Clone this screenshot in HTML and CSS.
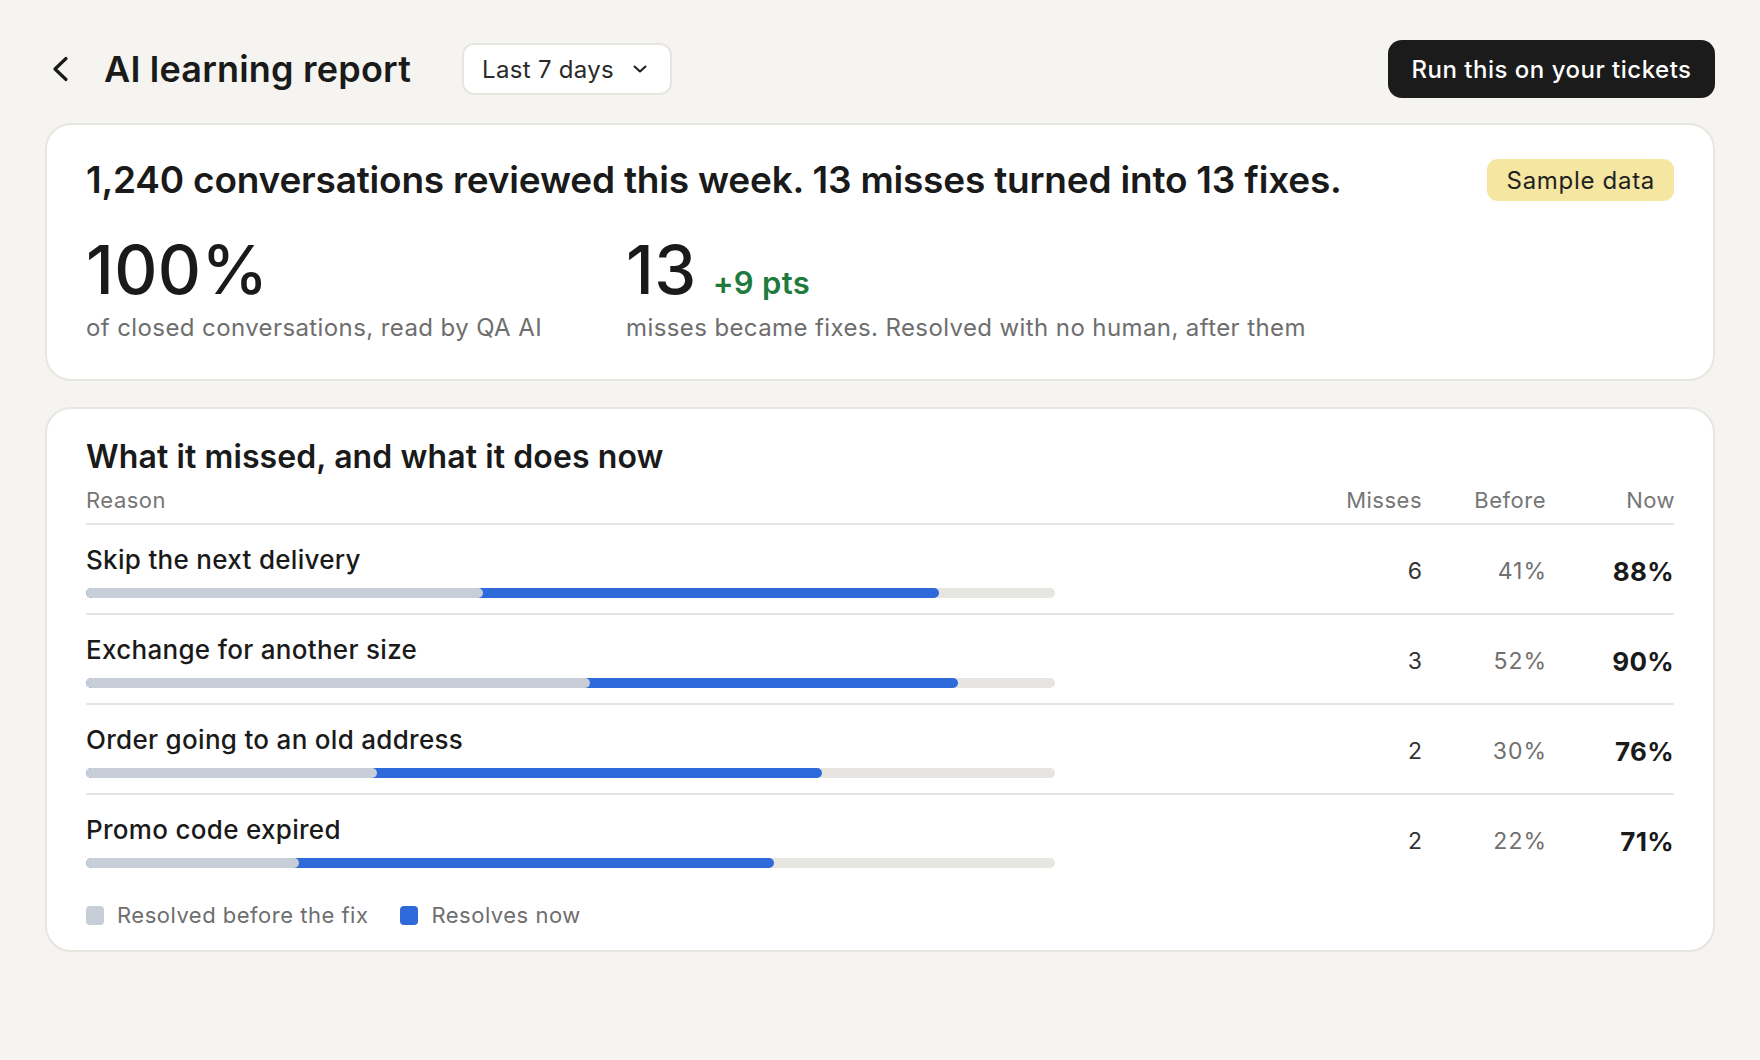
FILE: index.html
```html
<!DOCTYPE html>
<html lang="en">
<head>
<meta charset="utf-8">
<title>AI learning report</title>
<link rel="stylesheet" href="styles.css">
</head>
<body>
<div class="page">
  <header class="topbar">
    <div class="topbar-left">
      <button class="back" aria-label="Back">
        <svg width="18" height="26" viewBox="0 0 18 26"><polyline points="15,2.5 4,13 15,23.5" fill="none" stroke="#1a1a1a" stroke-width="3.2" stroke-linecap="round" stroke-linejoin="round"/></svg>
      </button>
      <h1 class="title">AI learning report</h1>
      <button class="range">
        <span>Last 7 days</span>
        <svg width="14" height="8" viewBox="0 0 14 8"><polyline points="1.5,1.5 7,6.5 12.5,1.5" fill="none" stroke="#1a1a1a" stroke-width="2" stroke-linecap="round" stroke-linejoin="round"/></svg>
      </button>
    </div>
    <button class="cta">Run this on your tickets</button>
  </header>

  <section class="card summary">
    <div class="summary-head">
      <h2 class="headline">1,240 conversations reviewed this week. 13 misses turned into 13 fixes.</h2>
      <span class="badge">Sample data</span>
    </div>
    <div class="stats">
      <div class="stat">
        <div class="stat-value"><span class="big">100%</span></div>
        <div class="stat-label">of closed conversations, read by QA AI</div>
      </div>
      <div class="stat">
        <div class="stat-value"><span class="big">13</span><span class="delta">+9 pts</span></div>
        <div class="stat-label">misses became fixes. Resolved with no human, after them</div>
      </div>
    </div>
  </section>

  <section class="card misses">
    <h2 class="section-title">What it missed, and what it does now</h2>
    <div class="table">
      <div class="row head">
        <div class="c-reason">Reason</div>
        <div class="c-num">Misses</div>
        <div class="c-num">Before</div>
        <div class="c-num">Now</div>
      </div>
      <div class="row item">
        <div class="c-reason">
          <div class="reason">Skip the next delivery</div>
          <div class="bar"><div class="now" style="width:88%"></div><div class="before" style="width:41%"></div></div>
        </div>
        <div class="c-num count">6</div>
        <div class="c-num pct">41%</div>
        <div class="c-num now-val">88%</div>
      </div>
      <div class="row item">
        <div class="c-reason">
          <div class="reason">Exchange for another size</div>
          <div class="bar"><div class="now" style="width:90%"></div><div class="before" style="width:52%"></div></div>
        </div>
        <div class="c-num count">3</div>
        <div class="c-num pct">52%</div>
        <div class="c-num now-val">90%</div>
      </div>
      <div class="row item">
        <div class="c-reason">
          <div class="reason">Order going to an old address</div>
          <div class="bar"><div class="now" style="width:76%"></div><div class="before" style="width:30%"></div></div>
        </div>
        <div class="c-num count">2</div>
        <div class="c-num pct">30%</div>
        <div class="c-num now-val">76%</div>
      </div>
      <div class="row item last">
        <div class="c-reason">
          <div class="reason">Promo code expired</div>
          <div class="bar"><div class="now" style="width:71%"></div><div class="before" style="width:22%"></div></div>
        </div>
        <div class="c-num count">2</div>
        <div class="c-num pct">22%</div>
        <div class="c-num now-val">71%</div>
      </div>
    </div>
    <div class="legend">
      <span class="key"><i class="sw sw-before"></i>Resolved before the fix</span>
      <span class="key"><i class="sw sw-now"></i>Resolves now</span>
    </div>
  </section>
</div>
</body>
</html>
```

FILE: styles.css
```css
* { box-sizing: border-box; }
html, body { margin: 0; padding: 0; }
body {
  background: #f5f4f0;
  font-family: Inter, "Noto Sans", "Liberation Sans", sans-serif;
  color: #1a1a1a;
}
button { font-family: inherit; cursor: pointer; }

.page {
  padding: 40px 45px 0 45px;
}

.topbar {
  display: flex;
  align-items: center;
  justify-content: space-between;
  height: 58px;
}
.topbar-left {
  display: flex;
  align-items: center;
}
.back {
  background: none;
  border: 0;
  padding: 0;
  margin-left: 6px;
  width: 18px;
  height: 26px;
  display: flex;
}
.title {
  margin: 0 0 0 35px;
  font-size: 36px;
  font-weight: 600;
  letter-spacing: 0.2px;
  line-height: 44px;
}
.range {
  margin-left: 51px;
  height: 52px;
  width: 210px;
  background: #fff;
  border: 2px solid #e7e5e0;
  border-radius: 12px;
  padding: 0 23px 0 18px;
  display: flex;
  align-items: center;
  justify-content: space-between;
  font-size: 24px;
  letter-spacing: 0.3px;
  color: #2a2a2a;
}
.cta {
  height: 58px;
  width: 327px;
  background: #1b1b1b;
  color: #fff;
  border: 0;
  border-radius: 14px;
  font-size: 24px;
  font-weight: 500;
  letter-spacing: 0.5px;
  padding: 0;
}

.card {
  background: #fff;
  border: 2px solid #e8e6e1;
  border-radius: 26px;
}

.summary {
  margin-top: 25px;
  padding: 32px 39px 37px 39px;
}
.summary-head {
  display: flex;
  align-items: center;
  justify-content: space-between;
}
.headline {
  margin: 0;
  font-size: 37px;
  font-weight: 600;
  letter-spacing: -0.2px;
  line-height: 46px;
}
.badge {
  background: #f5e6a2;
  border-radius: 11px;
  height: 42px;
  padding: 0 19px 0 20px;
  display: flex;
  align-items: center;
  font-size: 24px;
  letter-spacing: 0.7px;
  color: #222;
}
.stats {
  display: grid;
  grid-template-columns: 540px 1fr;
  margin-top: 31px;
}
.stat-value {
  display: flex;
  align-items: baseline;
  height: 72px;
  line-height: 72px;
}
.big {
  font-size: 67px;
  font-weight: 500;
  letter-spacing: 0.4px;
}
.delta {
  margin-left: 16px;
  font-size: 31px;
  font-weight: 600;
  letter-spacing: 0.3px;
  color: #1f7a3d;
}
.stat-label {
  margin-top: 8px;
  font-size: 24px;
  letter-spacing: 0.4px;
  line-height: 28px;
  color: #6e6e6e;
}

.misses {
  margin-top: 26px;
  padding: 28px 39px 21px 39px;
}
.section-title {
  margin: 0;
  font-size: 32px;
  font-weight: 600;
  letter-spacing: 0.1px;
  line-height: 39px;
}
.table {
  margin-top: 12px;
}
.row {
  display: grid;
  grid-template-columns: 1fr 110px 124px 129px;
  align-items: center;
}
.row.head {
  font-size: 22px;
  letter-spacing: 0.5px;
  line-height: 25px;
  color: #767676;
  padding-bottom: 10px;
  border-bottom: 2px solid #e6e5df;
}
.row.head .c-num { margin-right: -1px; }
.row.item {
  padding: 19px 0 15px 0;
  border-bottom: 2px solid #e6e5df;
}
.row.item.last {
  border-bottom: 0;
}
.c-num { text-align: right; }
.reason {
  font-size: 26px;
  font-weight: 500;
  letter-spacing: 0.3px;
  line-height: 32px;
}
.bar {
  position: relative;
  margin-top: 12px;
  width: 969px;
  height: 10px;
  border-radius: 5px;
  background: #e6e5e1;
  overflow: hidden;
}
.bar .now, .bar .before {
  position: absolute;
  left: 0;
  top: 0;
  bottom: 0;
  border-radius: 5px;
}
.bar .now { background: #2e6ad9; }
.bar .before { background: #c8ced8; }
.count {
  font-size: 23px;
  letter-spacing: 1px;
  margin-right: -2px;
  color: #333;
}
.pct {
  font-size: 23px;
  letter-spacing: 1px;
  margin-right: -2px;
  color: #707070;
}
.now-val {
  font-size: 26px;
  font-weight: 700;
  letter-spacing: 0.3px;
  color: #1a1a1a;
}

.legend {
  margin-top: 19px;
  display: flex;
  gap: 32px;
  font-size: 22px;
  letter-spacing: 0.5px;
  line-height: 27px;
  color: #6e6e6e;
}
.key {
  display: flex;
  align-items: center;
}
.sw {
  display: inline-block;
  width: 18px;
  height: 19px;
  border-radius: 4px;
  margin-right: 13px;
}
.sw-before { background: #c8ced8; }
.sw-now { background: #2e6ad9; }
```
